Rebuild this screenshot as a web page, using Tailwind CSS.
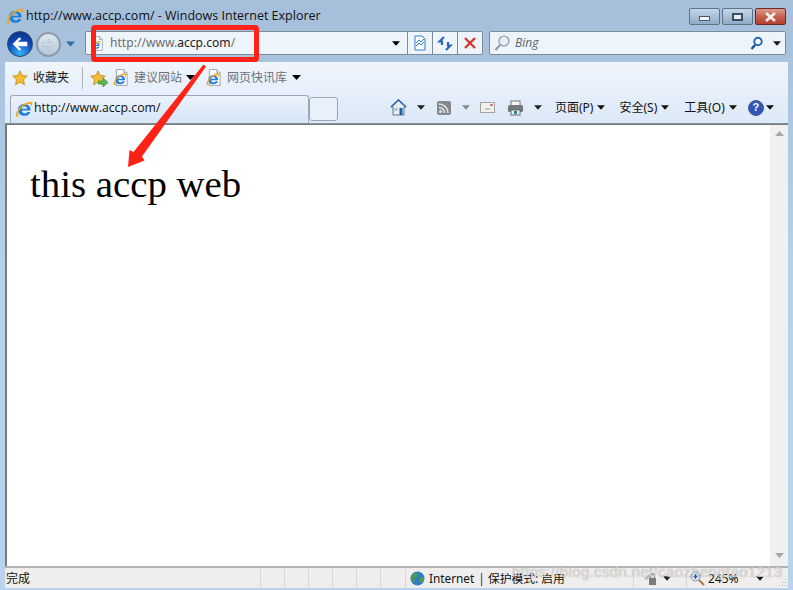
<!DOCTYPE html>
<html lang="zh-CN">
<head>
  <meta charset="UTF-8">
  <title>http://www.accp.com/ - Windows Internet Explorer</title>
  <script src="https://cdn.jsdelivr.net/npm/@tailwindcss/browser@4"></script>
</head>
<body class="m-0 overflow-hidden">
  <svg class="hidden">
    <symbol id="ie" viewBox="0 0 16 16">
      <path d="M8.300 3.600c3.500 0 5.700 2.300 5.500 5.800H6c.1 1.500 1.200 2.500 2.700 2.500 1 0 1.900-.5 2.400-1.300h2.600c-.8 2.200-2.900 3.500-5.200 3.500-3.300 0-5.800-2.200-5.800-5.300 0-2.800 2.300-5.200 5.600-5.200z M6 7.700h4.900c-.1-1.200-1.100-2-2.400-2S6.200 6.500 6 7.700z" fill="#1f7fdc" fill-rule="evenodd"/>
      <path d="M.9 14.600C-.2 12.200 3.500 5.900 8.500 3.200c3.200-1.800 6-2.300 6.800-1 .6 1-.2 2.700-1.300 3.900.3-1 .2-1.900-.2-2.300-.9-.9-3.200-.2-5.800 1.500C4.800 7.100 1.900 11.300 2.600 13.500c.2.500.7.700 1.400.7-1.400.9-2.700 1-3.100.4z" fill="#f0a920"/>
    </symbol>
    <symbol id="caret" viewBox="0 0 9 5">
      <path d="M0 0h9L4.500 5z" fill="currentColor"/>
    </symbol>
    <symbol id="doc" viewBox="0 0 16 18">
      <path d="M2.500.5h8l3.500 3.500v13.500H2.500z" fill="#fdfdfd" stroke="#9aa3ad"/>
      <path d="M10.500.5v3.500H14" fill="#dfe6ee" stroke="#9aa3ad"/>
    </symbol>
    <symbol id="star" viewBox="0 0 16 16">
      <path d="M8 .8l2.200 4.700 5.100.6-3.800 3.500 1 5.100L8 12.200l-4.500 2.500 1-5.100L.7 6.100l5.100-.6z" fill="#f5bd2f" stroke="#b98a1e" stroke-width=".8"/>
    </symbol>
  </svg>

  <div class="relative flex h-[590px] w-[793px] flex-col overflow-hidden bg-gradient-to-b from-[#a5bfda] via-[#b9d2ec] to-[#b9d3ee] font-['Noto_Sans','Noto_Sans_CJK_SC',sans-serif] text-[12px] text-[#1a1a1a]">

    <!-- title bar -->
    <div class="flex h-[31px] shrink-0 items-center pl-[6px] pr-[7px] pt-[1px]">
      <svg class="h-[18px] w-[18px]"><use href="#ie"/></svg>
      <span class="ml-[2px] font-['Open_Sans','Noto_Sans',sans-serif] text-[12.500px] leading-none text-[#111]">http://www.accp.com/ - Windows Internet Explorer</span>
      <div class="ml-auto flex gap-[2px] self-start pt-[7px]">
        <div class="flex h-[17px] w-[31px] items-center justify-center rounded-[2px] border border-[#5d7286] bg-gradient-to-b from-[#c6d7e9] via-[#a9c1da] to-[#8eaac7]">
          <div class="mt-[3px] h-[5px] w-[11px] border border-[#4a5a6a] bg-[#f3f5f7]"></div>
        </div>
        <div class="flex h-[17px] w-[31px] items-center justify-center rounded-[2px] border border-[#5d7286] bg-gradient-to-b from-[#c6d7e9] via-[#a9c1da] to-[#8eaac7]">
          <div class="h-[8px] w-[11px] border-2 border-[#3f4d5c] bg-[#e6edf4]"></div>
        </div>
        <div class="flex h-[17px] w-[31px] items-center justify-center rounded-[2px] border border-[#6b2a22] bg-gradient-to-b from-[#dc9a8c] via-[#c5604f] to-[#b53f2d]">
          <svg class="h-[10px] w-[13px]" viewBox="0 0 13 10"><path d="M2 1l9 8M11 1L2 9" stroke="#f2f2f2" stroke-width="2.600"/></svg>
        </div>
      </div>
    </div>

    <!-- navigation row -->
    <div class="flex h-[31px] shrink-0 items-start pl-[7px]">
      <div class="flex items-center">
        <div class="flex h-[26px] w-[26px] items-center justify-center rounded-full border border-[#27426b] bg-[radial-gradient(circle_at_50%_90%,#35b4f5,#1048b8_55%,#0a2a6e)]">
          <svg class="h-[18px] w-[18px]" viewBox="0 0 16 16"><path d="M7.500 2L1.500 8l6 6 1.600-1.600L6 10h8.500V6H6l3.100-2.400z" fill="#fff"/></svg>
        </div>
        <div class="ml-[3px] flex h-[25px] w-[25px] items-center justify-center rounded-full border-2 border-[#8d9aa8] bg-gradient-to-b from-[#dfe8f1] to-[#b4c8dc]">
          <svg class="h-[15px] w-[15px]" viewBox="0 0 16 16"><path d="M8.500 2l6 6-6 6-1.600-1.600L10 10H1.500V6H10L6.900 3.600z" fill="#cdd9e5" stroke="#aebccb" stroke-width=".7"/></svg>
        </div>
        <svg class="ml-[5px] h-[6px] w-[9px] text-[#2e6ea8]"><use href="#caret"/></svg>
      </div>
      <div class="ml-[10px] flex h-[24px] w-[398px] items-center rounded-[2px] border border-[#7d8b99] bg-[#eef4fb]">
        <div class="relative ml-[5px] h-[15px] w-[13px]">
          <svg class="h-[15px] w-[13px]"><use href="#doc"/></svg>
          <svg class="absolute left-0 top-[4px] h-[10px] w-[10px]"><use href="#ie"/></svg>
        </div>
        <span class="ml-[6px] mt-[1px] text-[12.100px] text-[#6d6d6d]">http://www.<span class="text-[#1a1a1a]">accp.com</span>/</span>
        <svg class="ml-auto mr-[7px] h-[5px] w-[8px] text-black"><use href="#caret"/></svg>
        <div class="flex h-full w-[25px] items-center justify-center border-l border-[#7d8b99]">
          <svg class="h-[16px] w-[14px]" viewBox="0 0 14 16"><path d="M2 1h7l3 3v11H2z" fill="#fff" stroke="#2b7fd0"/><path d="M3 11l3-3 2 2 3-3M3 8l3-3 2 2 3-3" fill="none" stroke="#2b7fd0"/></svg>
        </div>
        <div class="flex h-full w-[25px] items-center justify-center border-l border-[#7d8b99]">
          <svg class="h-[15px] w-[16px]" viewBox="0 0 16 15"><path d="M7 1L2.500 5.500H5V9M9 14l4.500-4.500H11V6" fill="none" stroke="#2568b8" stroke-width="2.200"/></svg>
        </div>
        <div class="flex h-full w-[25px] items-center justify-center border-l border-[#7d8b99]">
          <svg class="h-[12px] w-[12px]" viewBox="0 0 12 12"><path d="M1 1l10 10M11 1L1 11" stroke="#cf3a30" stroke-width="2.400"/></svg>
        </div>
      </div>
      <div class="ml-[6px] flex h-[24px] w-[297px] items-center rounded-[2px] border border-[#7d8b99] bg-[#eef4fb]">
        <svg class="ml-[4px] h-[17px] w-[16px]" viewBox="0 0 16 17"><circle cx="10" cy="6" r="5" fill="#e3eef8" stroke="#8c98a3" stroke-width="1.200"/><path d="M6 10l-4.500 5" stroke="#8c98a3" stroke-width="2"/></svg>
        <span class="ml-[5px] font-['Open_Sans',sans-serif] text-[12px] italic text-[#5c6670]">Bing</span>
        <svg class="ml-auto h-[14px] w-[13px]" viewBox="0 0 13 14"><circle cx="8" cy="5.500" r="3.700" fill="#fff" stroke="#2169b5" stroke-width="2"/><path d="M5 9l-3.500 4" stroke="#1b4f8e" stroke-width="2.400"/></svg>
        <svg class="ml-[10px] mr-[4px] h-[5px] w-[8px] text-[#1a1a1a]"><use href="#caret"/></svg>
      </div>
    </div>

    <!-- toolbars and page -->
    <div class="ml-[5px] mr-[5px] flex min-h-0 flex-1 flex-col">
      <div class="flex h-[62px] shrink-0 flex-col border-b border-[#8a8f96] bg-gradient-to-b from-[#f0f5fd] to-[#dce9f8]">
        <!-- favorites row -->
        <div class="flex h-[31px] shrink-0 items-center pl-[7px]">
          <svg class="h-[16px] w-[16px]"><use href="#star"/></svg>
          <span class="ml-[5px] text-[12px]">收藏夹</span>
          <div class="ml-[13px] h-[22px] w-px bg-[#aab4c0]"></div>
          <div class="relative ml-[7px] h-[16px] w-[16px]">
            <svg class="h-[16px] w-[16px]"><use href="#star"/></svg>
            <svg class="absolute bottom-[-1px] right-[-2px] h-[9px] w-[10px]" viewBox="0 0 10 9"><path d="M0 3h5V0l5 4.500L5 9V6H0z" fill="#5fb84a" stroke="#35792a" stroke-width=".6"/></svg>
          </div>
          <div class="relative ml-[8px] h-[17px] w-[15px]">
            <svg class="h-[17px] w-[15px]"><use href="#doc"/></svg>
            <svg class="absolute left-[-1px] top-[3px] h-[14px] w-[14px]"><use href="#ie"/></svg>
          </div>
          <span class="ml-[5px] text-[12px] text-[#6d7278]">建议网站</span>
          <svg class="ml-[4px] h-[5px] w-[9px] text-black"><use href="#caret"/></svg>
          <div class="relative ml-[12px] h-[17px] w-[15px]">
            <svg class="h-[17px] w-[15px]"><use href="#doc"/></svg>
            <svg class="absolute left-[-1px] top-[3px] h-[14px] w-[14px]"><use href="#ie"/></svg>
          </div>
          <span class="ml-[5px] text-[12px] text-[#6d7278]">网页快讯库</span>
          <svg class="ml-[5px] h-[5px] w-[9px] text-black"><use href="#caret"/></svg>
        </div>
        <!-- tab row -->
        <div class="flex min-h-0 flex-1 items-end pl-[5px]">
          <div class="flex h-[28px] w-[299px] items-center rounded-t-[3px] border border-b-0 border-[#9aa8b8] bg-gradient-to-b from-[#eaf2fc] to-[#d7e6f8] pb-[2px] pl-[4px]">
            <svg class="h-[18px] w-[18px]"><use href="#ie"/></svg>
            <span class="ml-[1px] font-['Open_Sans','Noto_Sans',sans-serif] text-[12.300px] text-[#111]">http://www.accp.com/</span>
          </div>
          <div class="mb-[2px] h-[24px] w-[29px] rounded-[3px] border border-[#9aa8b8] bg-[#e8f0fa]"></div>
          <!-- command bar -->
          <div class="flex h-[28px] flex-1 items-center pb-[3px] pl-[52px]">
            <svg class="h-[17px] w-[17px]" viewBox="0 0 17 17"><path d="M8.500 1L1 8h2v8h11V8h2z" fill="#e9edf0" stroke="#5f7486"/><path d="M1 8l7.500-7L16 8" fill="none" stroke="#2f5fb0" stroke-width="1.600"/><rect x="9.500" y="9" width="3" height="7" fill="#1f5fa8"/><rect x="4.500" y="9" width="3" height="3" fill="#9dc4e4"/></svg>
            <svg class="ml-[10px] h-[5px] w-[8px] text-[#222]"><use href="#caret"/></svg>
            <div class="relative ml-[12px] h-[14px] w-[14px] rounded-[2px] bg-[#86898c]">
              <svg class="h-[14px] w-[14px]" viewBox="0 0 14 14"><circle cx="3.500" cy="10.500" r="1.500" fill="#e4e4e4"/><path d="M2 6.500a5.500 5.500 0 0 1 5.500 5.500M2 3a9 9 0 0 1 9 9" fill="none" stroke="#e4e4e4" stroke-width="1.500"/></svg>
            </div>
            <svg class="ml-[11px] h-[5px] w-[8px] text-[#8a8a8a]"><use href="#caret"/></svg>
            <svg class="ml-[10px] h-[11px] w-[15px]" viewBox="0 0 15 11"><rect x=".5" y=".5" width="14" height="10" fill="#f2f0ee" stroke="#a3a3a3"/><rect x="10.500" y="2" width="2" height="2" fill="#d8443a"/><path d="M5 7h5" stroke="#999"/></svg>
            <svg class="ml-[12px] h-[16px] w-[17px]" viewBox="0 0 17 16"><rect x="4" y="1" width="9" height="5" fill="#f5f5f5" stroke="#777"/><rect x="1" y="5" width="15" height="7" rx="1.500" fill="#74797e"/><rect x="4" y="10" width="9" height="5" fill="#f5f5f5" stroke="#666"/><rect x="7" y="11" width="3" height="3" fill="#2a7ea8"/></svg>
            <svg class="ml-[10px] h-[5px] w-[8px] text-[#222]"><use href="#caret"/></svg>
            <span class="ml-[13px] text-[12px] text-[#111]">页面(P)</span>
            <svg class="ml-[4px] h-[5px] w-[8px] text-[#111]"><use href="#caret"/></svg>
            <span class="ml-[14px] text-[12px] text-[#111]">安全(S)</span>
            <svg class="ml-[4px] h-[5px] w-[8px] text-[#111]"><use href="#caret"/></svg>
            <span class="ml-[15px] text-[12px] text-[#111]">工具(O)</span>
            <svg class="ml-[4px] h-[5px] w-[8px] text-[#111]"><use href="#caret"/></svg>
            <div class="ml-[11px] flex h-[16px] w-[16px] items-center justify-center rounded-full border border-[#4a5a9a] bg-[#2f56b5] font-['Liberation_Sans',sans-serif] text-[11px] font-bold leading-none text-white">?</div>
            <svg class="ml-[2px] h-[5px] w-[8px] text-[#111]"><use href="#caret"/></svg>
          </div>
        </div>
      </div>

      <!-- page area -->
      <div class="flex min-h-0 flex-1 border-l-2 border-t border-[#777b80] bg-white">
        <main class="min-w-0 flex-1 pl-[23px] pt-[36px] font-['Liberation_Serif',serif] text-[38.800px] leading-[45px] text-black">this accp web</main>
        <div class="flex w-[18px] shrink-0 flex-col items-center justify-between bg-[#f0f0f0] pb-[8px] pt-[6px]">
          <svg class="h-[5px] w-[9px] rotate-180 text-[#a6a6a6]"><use href="#caret"/></svg>
          <svg class="h-[5px] w-[9px] text-[#a6a6a6]"><use href="#caret"/></svg>
        </div>
      </div>

      <!-- status bar -->
      <div class="flex h-[22px] shrink-0 items-center border-t-2 border-[#b3b3b3] bg-[#f0eded] pt-[1px]">
        <span class="ml-[1px] w-[254px] text-[12px] text-[#111]">完成</span>
        <div class="h-full w-[24px] border-l border-[#d6d6d3]"></div>
        <div class="h-full w-[24px] border-l border-[#d6d6d3]"></div>
        <div class="h-full w-[24px] border-l border-[#d6d6d3]"></div>
        <div class="h-full w-[24px] border-l border-[#d6d6d3]"></div>
        <div class="h-full w-[24px] border-l border-[#d6d6d3]"></div>
        <div class="h-full w-[25px] border-l border-[#d6d6d3]"></div>
        <div class="flex h-full w-[228px] items-center border-l border-[#d6d6d3] pl-[4px]">
          <svg class="h-[15px] w-[15px]" viewBox="0 0 15 15"><circle cx="7.500" cy="7.500" r="7" fill="#2f7fc4"/><path d="M3 3c2-1 4-1 5 0l-1 3-3 1 1 3-2 1-2-3zM10 7l3-1 1 3-3 4-1-3z" fill="#4fa04a"/></svg>
          <span class="ml-[4px] text-[11.800px] text-[#111]">Internet</span>
          <span class="ml-[4px] text-[12px] text-[#4a1a5a]">|</span>
          <span class="ml-[3px] text-[11.800px] text-[#111]">保护模式: 启用</span>
        </div>
        <div class="flex h-full w-[53px] items-center border-l border-[#d6d6d3] pl-[10px]">
          <svg class="h-[14px] w-[13px]" viewBox="0 0 13 14"><rect x="5" y="6" width="7" height="7" fill="#7b7b7b"/><path d="M6.500 6V4a2 2 0 0 1 4 0v2" fill="none" stroke="#8a8a8a" stroke-width="1.300"/><path d="M0 7l5-5 1 3-3 3z" fill="#b9b9b9"/></svg>
          <svg class="ml-[6px] h-[5px] w-[8px] text-[#222]"><use href="#caret"/></svg>
        </div>
        <div class="flex h-full flex-1 items-center border-l border-[#d6d6d3] pl-[3px]">
          <svg class="h-[15px] w-[15px]" viewBox="0 0 15 15"><circle cx="5.500" cy="5.500" r="4.500" fill="#e8f0f8" stroke="#6d88a6"/><path d="M3 5.500h5M5.500 3v5" stroke="#2563b5" stroke-width="1.500"/><path d="M9 9l5 5" stroke="#a67c3d" stroke-width="2"/></svg>
          <span class="ml-[3px] text-[12px] text-[#111]">245%</span>
          <svg class="ml-[17px] h-[5px] w-[8px] text-[#111]"><use href="#caret"/></svg>
          <svg class="ml-auto mr-[1px] mt-[8px] h-[9px] w-[9px]" viewBox="0 0 9 9"><path d="M7 1h1v1H7zM4 4h1v1H4zM7 4h1v1H7zM1 7h1v1H1zM4 7h1v1H4zM7 7h1v1H7z" fill="#b4b4b4"/></svg>
        </div>
      </div>
    </div>
    <div class="h-[2px] shrink-0"></div>

    <!-- annotation drawn over the screenshot -->
    <div class="pointer-events-none absolute left-[91px] top-[25px] h-[37px] w-[168px] rounded-[4px] border-[5px] border-[#ff2216]"></div>
    <svg class="pointer-events-none absolute left-0 top-0 h-[590px] w-[793px]" viewBox="0 0 793 590">
      <path d="M203.500 64.500L206 66.500 142 156.500 144.500 160.500 128 167 129.500 150 133.500 152z" fill="#ff2216"/>
    </svg>
    <div class="pointer-events-none absolute left-[512px] top-[564px] whitespace-nowrap font-['Liberation_Sans',sans-serif] text-[15px] leading-none tracking-[.35px] text-white/60 [text-shadow:0_0_1px_rgba(110,110,110,.7)]">https://blog.csdn.net/caozhengtao1213</div>
  </div>
</body>
</html>
